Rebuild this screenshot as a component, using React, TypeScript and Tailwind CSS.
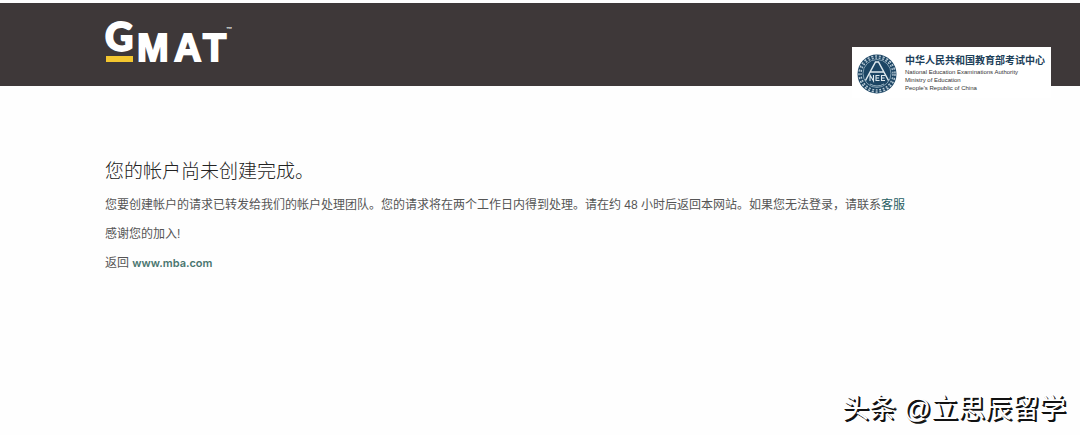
function GmatLogo() {
  return (
    <svg
      width="134"
      height="66"
      viewBox="-3 -12 134 66"
      role="img"
      aria-label="GMAT"
      className="font-['Liberation_Sans',sans-serif] font-bold"
    >
      <g fill="#fff" stroke="#fff" strokeWidth="1.8">
        <text
          x="0"
          y="31"
          fontSize="39"
          className="font-['Lato','Liberation_Sans',sans-serif] font-black"
        >
          G
        </text>
        <text x="32" y="41" fontSize="38">
          M
        </text>
        <text x="69" y="41" fontSize="38">
          A
        </text>
        <text x="98" y="41" fontSize="38">
          T
        </text>
      </g>
      <text x="121" y="11" fontSize="6" fill="#fff">
        ™
      </text>
      <rect x="1" y="36" width="27" height="6" fill="#f3c62f" />
    </svg>
  );
}

function NeeaSeal() {
  return (
    <svg width="40" height="40" viewBox="0 0 40 40" aria-hidden="true">
      <circle cx="20" cy="20" r="19.5" fill="#1c4564" />
      {/* laurel wreath */}
      <circle
        cx="20"
        cy="20"
        r="17"
        fill="none"
        stroke="#b9cbd6"
        strokeWidth="3.4"
        strokeDasharray="2 1.7"
      />
      <circle
        cx="20"
        cy="20"
        r="17"
        fill="none"
        stroke="#1c4564"
        strokeWidth="0.7"
      />
      <circle
        cx="20"
        cy="19.5"
        r="14"
        fill="#1c4564"
        stroke="#9db6c5"
        strokeWidth="0.8"
      />
      <path
        d="M8.500 26.500 18.500 8h3L31.500 26.500M13.500 18h13"
        fill="none"
        stroke="#dfe9ee"
        strokeWidth="1.5"
      />
      <path
        d="M13 27v-6l3.500 6v-6M22.500 21.500H19V26.500h3.500M19 24h3M28 21.500h-3.500V26.500H28M24.500 24h3"
        fill="none"
        stroke="#dfe9ee"
        strokeWidth="1.1"
      />
      <path d="M13 30q7 4 14 0" fill="none" stroke="#9db6c5" strokeWidth="1" />
    </svg>
  );
}

function AuthorityCard() {
  return (
    <div className="-mb-3 flex items-start bg-white pt-[7px] pr-[6px] pb-1 pl-[5px]">
      <NeeaSeal />
      <div className="ml-2 whitespace-nowrap">
        <p className="font-['Liberation_Serif','Noto_Sans_CJK_SC',serif] text-[10px] leading-[14px] font-bold text-[#1d4059]">
          中华人民共和国教育部考试中心
        </p>
        <div className="text-[6px] leading-[8px] text-[#333]">
          <p>National Education Examinations Authority</p>
          <p>Ministry of Education</p>
          <p>People's Republic of China</p>
        </div>
      </div>
    </div>
  );
}

export default function App() {
  return (
    <div className="flex min-h-screen flex-col bg-[#fefefe] pt-[3px] font-['Liberation_Sans','Noto_Sans_CJK_SC',sans-serif]">
      <header className="flex h-[83px] items-end justify-between bg-[#3e3839] pr-[29px] pl-[102px]">
        <a href="#" className="mb-3">
          <GmatLogo />
        </a>
        <AuthorityCard />
      </header>

      <main className="flex-1 px-[105px] pt-[71px] text-[12px] leading-[29px] text-[#555]">
        <h1 className="text-[19px] leading-[30px] font-light text-[#222]">
          您的帐户尚未创建完成。
        </h1>
        <p className="mt-1">
          您要创建帐户的请求已转发给我们的帐户处理团队。您的请求将在两个工作日内得到处理。请在约
          48 小时后返回本网站。如果您无法登录，请联系
          <a href="#" className="text-[#285f63]">
            客服
          </a>
        </p>
        <p>感谢您的加入!</p>
        <p>
          返回{" "}
          <a
            href="#"
            className="font-['Inter','Liberation_Sans',sans-serif] text-[11px] font-semibold text-[#4a7670]"
          >
            www.mba.com
          </a>
        </p>
      </main>

      <footer className="flex justify-end px-3.5 pb-1.5">
        <p className="text-[27px] leading-10 text-white [text-shadow:2px_2px_0_#111,1px_1px_0_#111]">
          头条 @立思辰留学
        </p>
      </footer>
    </div>
  );
}
